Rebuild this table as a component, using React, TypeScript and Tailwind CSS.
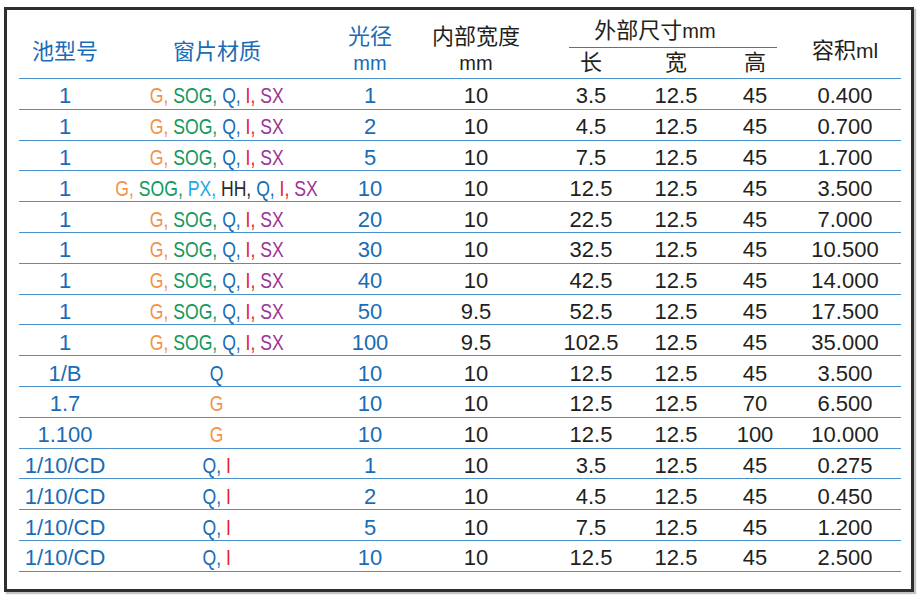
import React from "react";

type Part = { t: string; c: string };

const O = "text-[#f4924a]";
const GR = "text-[#12995a]";
const B = "text-[#1a6cb6]";
const R = "text-[#e5202a]";
const P = "text-[#9b3597]";
const C = "text-[#20a9e6]";
const K = "text-[#2a2a2a]";

const std: Part[] = [
  { t: "G, ", c: O },
  { t: "SOG, ", c: GR },
  { t: "Q, ", c: B },
  { t: "I, ", c: R },
  { t: "SX", c: P },
];
const big: Part[] = [
  { t: "G, ", c: O },
  { t: "SOG, ", c: GR },
  { t: "PX, ", c: C },
  { t: "HH, ", c: K },
  { t: "Q, ", c: B },
  { t: "I, ", c: R },
  { t: "SX", c: P },
];
const q: Part[] = [{ t: "Q", c: B }];
const g: Part[] = [{ t: "G", c: O }];
const qi: Part[] = [
  { t: "Q, ", c: B },
  { t: "I", c: R },
];

const rows: [string, Part[], string, string, string, string, string, string][] = [
  ["1", std, "1", "10", "3.5", "12.5", "45", "0.400"],
  ["1", std, "2", "10", "4.5", "12.5", "45", "0.700"],
  ["1", std, "5", "10", "7.5", "12.5", "45", "1.700"],
  ["1", big, "10", "10", "12.5", "12.5", "45", "3.500"],
  ["1", std, "20", "10", "22.5", "12.5", "45", "7.000"],
  ["1", std, "30", "10", "32.5", "12.5", "45", "10.500"],
  ["1", std, "40", "10", "42.5", "12.5", "45", "14.000"],
  ["1", std, "50", "9.5", "52.5", "12.5", "45", "17.500"],
  ["1", std, "100", "9.5", "102.5", "12.5", "45", "35.000"],
  ["1/B", q, "10", "10", "12.5", "12.5", "45", "3.500"],
  ["1.7", g, "10", "10", "12.5", "12.5", "70", "6.500"],
  ["1.100", g, "10", "10", "12.5", "12.5", "100", "10.000"],
  ["1/10/CD", qi, "1", "10", "3.5", "12.5", "45", "0.275"],
  ["1/10/CD", qi, "2", "10", "4.5", "12.5", "45", "0.450"],
  ["1/10/CD", qi, "5", "10", "7.5", "12.5", "45", "1.200"],
  ["1/10/CD", qi, "10", "10", "12.5", "12.5", "45", "2.500"],
];

const cols = "grid grid-cols-[92px_212px_94px_118px_112px_58px_100px_96px]";

export default function App() {
  return (
    <div className="w-[922px] h-[599px] bg-white font-['Liberation_Sans','Noto_Sans_CJK_SC',sans-serif] overflow-hidden">
      <div className="ml-[4px] mt-[7px] w-[910px] h-[585px] border-[3px] border-[#2e2e2e] shadow-[2px_2px_1px_#c4c4c4] pl-[12px] pr-[10px]">
        {/* header */}
        <div className={`${cols} h-[69px] border-b-[1.5px] border-[#4a90cd]`}>
          <div className="flex justify-center items-center pt-[14px] text-[22px] text-[#1a6cb6]">池型号</div>
          <div className="flex justify-center items-center pt-[14px] text-[22px] text-[#1a6cb6]">窗片材质</div>
          <div className="flex flex-col items-center pt-[14px] text-[#1a6cb6]">
            <div className="text-[22px] leading-[26px]">光径</div>
            <div className="text-[20px] leading-[26px]">mm</div>
          </div>
          <div className="flex flex-col items-center pt-[14px] text-[#231f20]">
            <div className="text-[22px] leading-[26px]">内部宽度</div>
            <div className="text-[20px] leading-[26px]">mm</div>
          </div>
          <div className="col-span-3 flex flex-col pt-[8px] text-[#231f20]">
            <div className="ml-[34px] mr-[28px] pb-[3px] border-b-[1.5px] border-[#2f7fc4] flex justify-center items-baseline pr-[36px]">
              <span className="text-[22px] leading-[26px]">外部尺寸</span>
              <span className="text-[20px] leading-[26px]">mm</span>
            </div>
            <div className="grid grid-cols-[112px_58px_100px] text-[22px] leading-[26px] mt-[2px]">
              <div className="text-center">长</div>
              <div className="text-center">宽</div>
              <div className="text-center">高</div>
            </div>
          </div>
          <div className="flex justify-center items-baseline pt-[24px] pr-[16px] text-[#231f20]">
            <span className="text-[22px]">容积</span>
            <span className="text-[21px]">ml</span>
          </div>
        </div>
        {/* body */}
        {rows.map((r, i) => (
          <div
            key={i}
            className={`${cols} h-[30.8px] pt-[5px] border-b-[1.5px] border-[#4a90cd] text-[22px] leading-none items-center`}
          >
            <div className="text-center text-[#1a6cb6]">{r[0]}</div>
            <div className="flex justify-center">
              <span className="inline-block scale-x-[0.8] whitespace-pre">
                {r[1].map((p, j) => (
                  <span key={j} className={p.c}>
                    {p.t}
                  </span>
                ))}
              </span>
            </div>
            <div className="text-center text-[#1a6cb6]">{r[2]}</div>
            <div className="text-center text-[#231f20]">{r[3]}</div>
            <div className="text-center text-[#231f20]">{r[4]}</div>
            <div className="text-center text-[#231f20]">{r[5]}</div>
            <div className="text-center text-[#231f20]">{r[6]}</div>
            <div className="text-center text-[#231f20] pr-[16px]">{r[7]}</div>
          </div>
        ))}
      </div>
    </div>
  );
}
